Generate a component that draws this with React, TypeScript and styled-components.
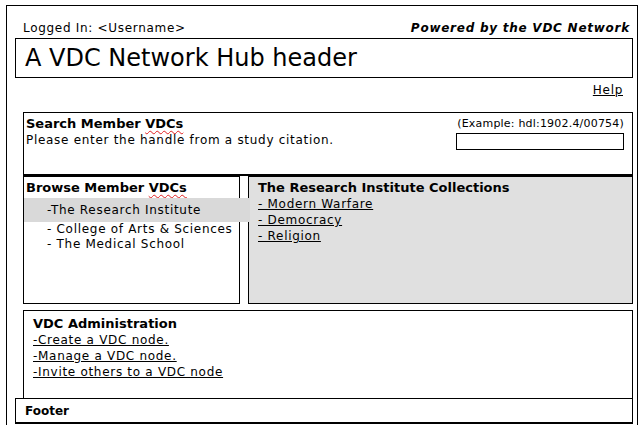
import * as React from 'react';
import styled, { createGlobalStyle } from 'styled-components';

const GlobalStyle = createGlobalStyle`
    html, body {
        margin: 0;
        padding: 0;
        background: #fff;
    }
    body {
        font-family: "DejaVu Sans", Verdana, sans-serif;
        font-size: 12px;
        letter-spacing: 0.7px;
        color: #000;
    }
`;

const Frame = styled.div`
    margin: 5px 0 0 6px;
    width: 630px;
    height: 419px;
    border: 1px solid #000;
    border-bottom: none;
    display: flex;
    flex-direction: column;
`;

const TopBar = styled.div`
    height: 32px;
    display: flex;
    align-items: flex-end;
    justify-content: space-between;
    padding: 0 7px 3px 16px;
    box-sizing: border-box;
`;

const Powered = styled.span`
    font-weight: bold;
    font-style: italic;
    letter-spacing: 0.75px;
`;

const HeaderBox = styled.div`
    margin: 0 4px 0 8px;
    height: 40px;
    border: 1px solid #000;
    box-sizing: border-box;
    display: flex;
    align-items: center;
    padding-left: 9px;
    font-size: 24px;
    letter-spacing: 0;
`;

const HelpRow = styled.div`
    height: 34px;
    display: flex;
    justify-content: flex-end;
    padding: 5px 14px 0 0;
    box-sizing: border-box;
`;

const Link = styled.a`
    color: #000;
    text-decoration: underline;
    cursor: pointer;
`;

const Content = styled.div`
    margin: 0 4px 0 16px;
    display: flex;
    flex-direction: column;
`;

const SearchBox = styled.div`
    height: 64px;
    border: 1px solid #000;
    border-bottom-width: 2px;
    box-sizing: border-box;
    display: flex;
    justify-content: space-between;
    padding: 3px 8px 0 2px;
`;

const SectionTitle = styled.div`
    font-weight: bold;
    font-size: 13px;
    line-height: 16px;
    letter-spacing: 0;
`;

const Misspelled = styled.span`
    text-decoration: underline wavy #e02020;
    text-decoration-thickness: 1px;
    text-underline-offset: 2px;
`;

const Line = styled.div`
    line-height: 16px;
`;

const SearchRight = styled.div`
    display: flex;
    flex-direction: column;
    align-items: flex-end;
    font-size: 11px;
    line-height: 15px;
    letter-spacing: 0.2px;
`;

const HandleInput = styled.input`
    margin-top: 2px;
    width: 168px;
    height: 17px;
    border: 1px solid #000;
    box-sizing: border-box;
    padding: 0 2px;
    font: inherit;
`;

const BrowseRow = styled.div`
    display: flex;
    gap: 8px;
    height: 128px;
`;

const Panel = styled.div<{ $grey?: boolean; $width?: number }>`
    ${p => (p.$width ? `width: ${p.$width}px;` : 'flex: 1;')}
    border: 1px solid #000;
    box-sizing: border-box;
    background: ${p => (p.$grey ? '#e0e0e0' : '#fff')};
    padding: ${p => (p.$grey ? '3px 0 0 9px' : '3px 0 0 2px')};
`;

const VdcList = styled.div`
    margin: 2px 0 0 -2px;
    display: flex;
    flex-direction: column;
`;

const VdcItem = styled.div<{ $selected?: boolean }>`
    line-height: 15px;
    padding-left: 23px;
    ${p =>
        p.$selected &&
        `
        position: relative;
        z-index: 1;
        background: #d9d9d9;
        margin-right: -11px;
        line-height: 24px;
    `}
`;

const AdminBox = styled.div`
    margin-top: 6px;
    height: 88px;
    border: 1px solid #000;
    border-bottom: none;
    box-sizing: border-box;
    padding: 5px 0 0 9px;
`;

const Footer = styled.div`
    margin: 0 4px 0 8px;
    height: 26px;
    border: 1px solid #000;
    border-bottom-width: 2px;
    box-sizing: border-box;
    display: flex;
    align-items: center;
    padding-left: 9px;
    font-weight: bold;
    letter-spacing: 0;
`;

const vdcs = ['-The Research Institute', ' - College of Arts & Sciences', ' - The Medical School'];
const collections = ['- Modern Warfare', '- Democracy', '- Religion'];
const adminLinks = ['-Create a VDC node.', '-Manage a VDC node.', '-Invite others to a VDC node'];

export default function App() {
    return (
        <>
            <GlobalStyle />
            <Frame>
                <TopBar>
                    <span>Logged In: &lt;Username&gt;</span>
                    <Powered>Powered by the VDC Network</Powered>
                </TopBar>
                <HeaderBox>A VDC Network Hub header</HeaderBox>
                <HelpRow>
                    <Link>Help</Link>
                </HelpRow>
                <Content>
                    <SearchBox>
                        <div>
                            <SectionTitle>
                                Search Member <Misspelled>VDCs</Misspelled>
                            </SectionTitle>
                            <Line>Please enter the handle from a study citation.</Line>
                        </div>
                        <SearchRight>
                            <span>(Example: hdl:1902.4/00754)</span>
                            <HandleInput type="text" />
                        </SearchRight>
                    </SearchBox>
                    <BrowseRow>
                        <Panel $width={217}>
                            <SectionTitle>
                                Browse Member <Misspelled>VDCs</Misspelled>
                            </SectionTitle>
                            <VdcList>
                                {vdcs.map((v, i) => (
                                    <VdcItem key={v} $selected={i === 0}>
                                        {v}
                                    </VdcItem>
                                ))}
                            </VdcList>
                        </Panel>
                        <Panel $grey>
                            <SectionTitle>The Research Institute Collections</SectionTitle>
                            {collections.map(c => (
                                <Line key={c}>
                                    <Link>{c}</Link>
                                </Line>
                            ))}
                        </Panel>
                    </BrowseRow>
                    <AdminBox>
                        <SectionTitle>VDC Administration</SectionTitle>
                        {adminLinks.map(a => (
                            <Line key={a}>
                                <Link>{a}</Link>
                            </Line>
                        ))}
                    </AdminBox>
                </Content>
                <Footer>Footer</Footer>
            </Frame>
        </>
    );
}
